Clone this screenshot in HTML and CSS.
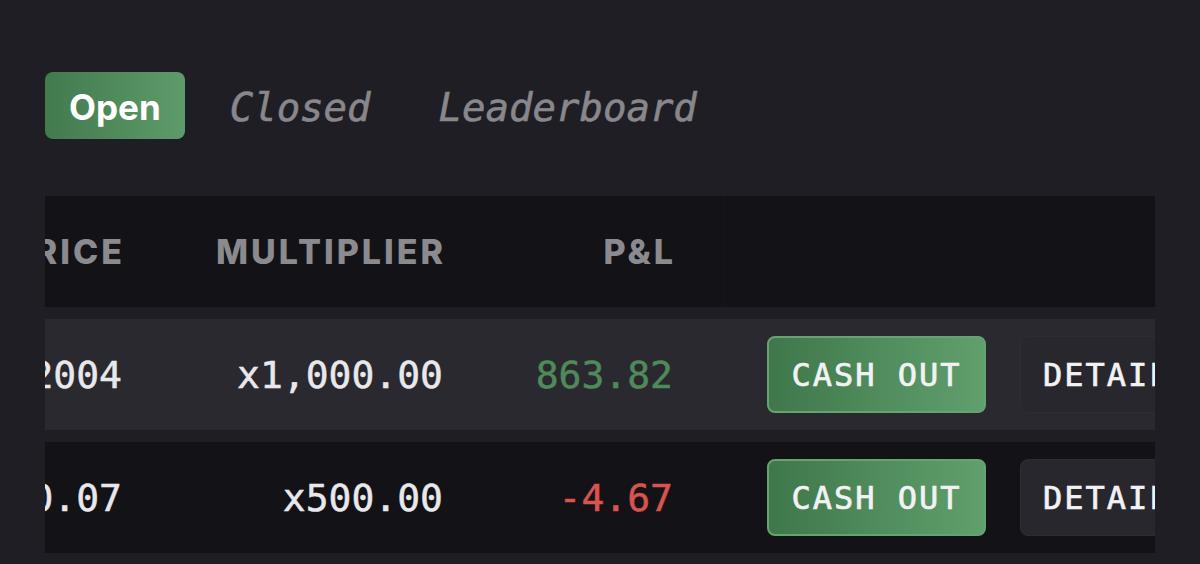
FILE: index.html
```html
<!DOCTYPE html>
<html lang="en">
<head>
    <meta charset="UTF-8">
    <meta name="viewport" content="width=device-width, initial-scale=1.0">
    <title>Positions</title>
    <link rel="stylesheet" href="styles.css">
</head>
<body>
    <div class="tabs">
        <button class="tab active">Open</button>
        <button class="tab">Closed</button>
        <button class="tab">Leaderboard</button>
    </div>

    <div class="table-wrap">
        <div class="table">
            <div class="row head">
                <div class="cell">PRICE</div>
                <div class="cell">MULTIPLIER</div>
                <div class="cell">P&amp;L</div>
                <div class="cell actions"></div>
            </div>
            <div class="row light">
                <div class="cell">0.2004</div>
                <div class="cell">x1,000.00</div>
                <div class="cell pos">863.82</div>
                <div class="cell actions">
                    <button class="cash-out">CASH OUT</button>
                    <button class="details">DETAILS</button>
                </div>
            </div>
            <div class="row dark">
                <div class="cell">0.07</div>
                <div class="cell">x500.00</div>
                <div class="cell neg">-4.67</div>
                <div class="cell actions">
                    <button class="cash-out">CASH OUT</button>
                    <button class="details">DETAILS</button>
                </div>
            </div>
        </div>
    </div>
</body>
</html>
```

FILE: styles.css
```css
body {
    margin: 0;
    padding: 72px 45px 0;
    background-color: #1f1e24;
    font-family: 'DejaVu Sans Mono', monospace;
    color: #e8e8ec;
}

.tabs {
    display: flex;
    gap: 22px;
}

.tab {
    height: 67px;
    padding: 4px 23px 0;
    border: none;
    border-radius: 8px;
    background: none;
    font-family: 'DejaVu Sans Mono', monospace;
    font-style: italic;
    font-size: 39px;
    color: #88878c;
    -webkit-text-stroke: 0.6px #88878c;
    cursor: pointer;
}

.tab.active {
    padding: 3px 24px 0;
    background: linear-gradient(90deg, #427a4d, #5e9b6a);
    font-family: 'Inter', sans-serif;
    font-style: normal;
    font-weight: 700;
    font-size: 35px;
    color: #ffffff;
    -webkit-text-stroke: 0;
}

.table-wrap {
    margin-top: 57px;
    width: 1110px;
    overflow: hidden;
}

.table {
    display: flex;
    flex-direction: column;
    gap: 12px;
    width: 1500px;
    margin-left: -200px;
}

.row {
    display: grid;
    grid-template-columns: 277px 321px 230px 1fr;
    height: 111px;
    align-items: center;
}

.row.head {
    background-color: #131217;
}

.row.light {
    background-color: #2a292f;
}

.row.dark {
    background-color: #131217;
}

.cell {
    text-align: right;
    font-size: 38px;
    white-space: nowrap;
    -webkit-text-stroke: 0.5px currentColor;
}

.head .cell {
    font-family: 'Inter', sans-serif;
    font-weight: 800;
    font-size: 34px;
    letter-spacing: 3px;
    margin-right: -3px;
    color: #8b8a8f;
    -webkit-text-stroke: 0;
}

.head .actions {
    align-self: stretch;
    margin-left: 51px;
    border-left: 1px solid #17161b;
}

.cell.pos {
    color: #4f8a5b;
}

.cell.neg {
    color: #d9534f;
}

.cell.actions {
    display: flex;
    gap: 34px;
    padding-left: 94px;
    text-align: left;
    -webkit-text-stroke: 0;
}

.cash-out,
.details {
    height: 77px;
    padding: 0 22px;
    border-radius: 8px;
    font-family: 'DejaVu Sans Mono', monospace;
    font-size: 32px;
    letter-spacing: 2px;
    color: #f2f2f4;
    -webkit-text-stroke: 0.7px #f2f2f4;
    cursor: pointer;
}

.cash-out {
    width: 219px;
    background: linear-gradient(90deg, #3f774a, #60a06d);
    border: 2px solid #65a472;
}

.details {
    width: 200px;
    background-color: #28272d;
    border: 1px solid #2e2d33;
    text-align: left;
}
```
